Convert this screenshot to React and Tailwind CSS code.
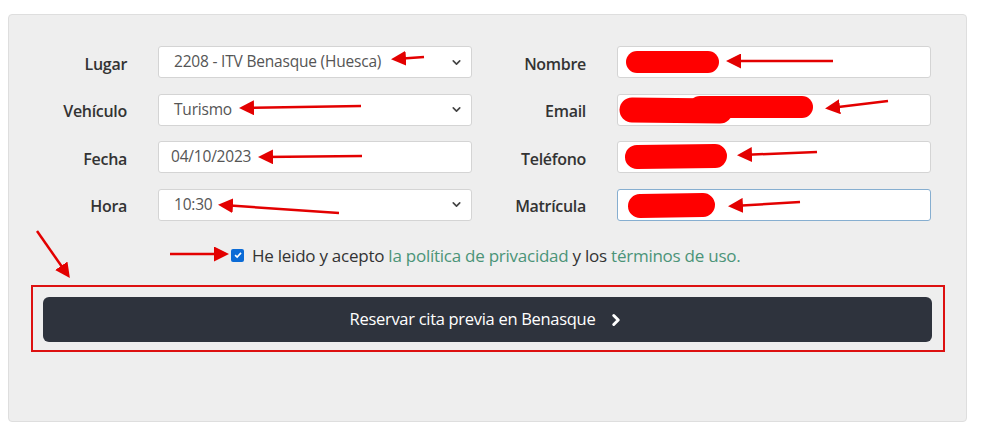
import { ChevronDown, ChevronRight } from 'lucide-react'

const font = { fontFamily: '"Open Sans", "Liberation Sans", sans-serif' }

function Field({ label, value, select, focus, right }) {
  return (
    <div className="flex items-center">
      <div className={`${right ? 'w-[114px]' : 'w-[118px]'} pt-[3px] text-right text-[16px] font-semibold text-[#333] tracking-[-0.3px]`}>
        {label}
      </div>
      <div
        className={`ml-[31px] w-[314px] h-[32px] bg-white rounded-[3px] border flex items-center justify-between ${
          focus ? 'border-[#86aed0]' : 'border-[#d4d4d4]'
        } ${select ? 'pl-[15px] pr-[8px]' : 'pl-[12px]'}`}
      >
        <span className="text-[15.5px] text-[#555] tracking-[-0.2px]">{value}</span>
        {select && <ChevronDown className="w-[13px] h-[13px] text-[#444]" strokeWidth={3} />}
      </div>
    </div>
  )
}

function Arrow({ x1, y1, x2, y2 }) {
  return <line x1={x1} y1={y1} x2={x2} y2={y2} stroke="#e30000" strokeWidth="2.5" markerEnd="url(#head)" />
}

export default function App() {
  return (
    <div className="relative w-[981px] h-[439px] bg-white pt-[14px] pl-[8px] pr-[14px]" style={font}>
      <div className="h-[408px] bg-[#eeeeee] border border-[#dedede] rounded-[4px] pt-[31px]">
        <div className="flex flex-col gap-[15.5px]">
          <div className="flex">
            <Field label="Lugar" value="2208 - ITV Benasque (Huesca)" select />
            <Field label="Nombre" value="" right />
          </div>
          <div className="flex">
            <Field label="Vehículo" value="Turismo" select />
            <Field label="Email" value="" right />
          </div>
          <div className="flex">
            <Field label="Fecha" value="04/10/2023" />
            <Field label="Teléfono" value="" right />
          </div>
          <div className="flex">
            <Field label="Hora" value="10:30" select />
            <Field label="Matrícula" value="" focus right />
          </div>
        </div>

        <div className="mt-[22px] flex items-center pl-[222px] text-[17px] text-[#333] tracking-[-0.25px]">
          <span className="w-[13px] h-[13px] rounded-[2px] bg-[#0b6bd6] flex items-center justify-center">
            <svg viewBox="0 0 12 12" className="w-[10px] h-[10px]">
              <path d="M2.5 6.2 L5 8.6 L9.6 3.4" fill="none" stroke="white" strokeWidth="2" />
            </svg>
          </span>
          <span className="ml-[8px]">
            He leido y acepto <span className="text-[#4b9478]">la política de privacidad</span> y los{' '}
            <span className="text-[#4b9478]">términos de uso.</span>
          </span>
        </div>

        <div className="mt-[17px] ml-[22px] mr-[21px] border-2 border-[#dd1111] pt-[10px] pb-[8px] pl-[10px] pr-[11px]">
          <button className="w-full h-[45px] rounded-[6px] bg-[#2e333d] text-white text-[16.5px] tracking-[-0.3px] flex items-center justify-center gap-[12px]">
            <span>Reservar cita previa en Benasque</span>
            <ChevronRight className="w-[18px] h-[18px]" strokeWidth={4} />
          </button>
        </div>
      </div>

      <svg className="absolute inset-0 pointer-events-none" width="981" height="439">
        <defs>
          <marker id="head" markerWidth="6" markerHeight="6" refX="4" refY="3" orient="auto" markerUnits="strokeWidth">
            <path d="M0 0 L6 3 L0 6 Z" fill="#e30000" />
          </marker>
        </defs>
        <g stroke="#ff0000" strokeLinecap="round" fill="none">
          <line x1="637" y1="62" x2="708" y2="62" strokeWidth="22" />
          <line x1="632" y1="110" x2="720" y2="111" strokeWidth="25" />
          <line x1="700" y1="107" x2="802" y2="107" strokeWidth="22" />
          <line x1="637" y1="157" x2="715" y2="156" strokeWidth="24" />
          <line x1="640" y1="206" x2="703" y2="205" strokeWidth="24" />
        </g>
        <Arrow x1={424} y1={57} x2={396} y2={59} />
        <Arrow x1={361} y1={106} x2={244} y2={108} />
        <Arrow x1={362} y1={156} x2={263} y2={157} />
        <Arrow x1={339} y1={213} x2={223} y2={205} />
        <Arrow x1={833} y1={61} x2={731} y2={61} />
        <Arrow x1={888} y1={101} x2={830} y2={108} />
        <Arrow x1={817} y1={152} x2={742} y2={155} />
        <Arrow x1={800} y1={202} x2={733} y2={206} />
        <Arrow x1={170} y1={254} x2={224} y2={254} />
        <Arrow x1={37} y1={231} x2={67} y2={274} />
      </svg>
    </div>
  )
}
